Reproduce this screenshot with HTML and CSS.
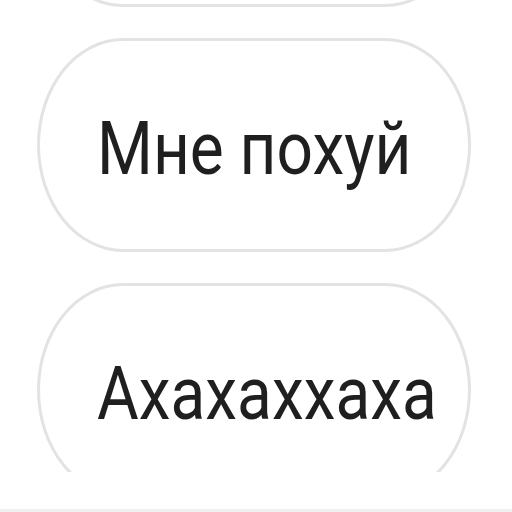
FILE: index.html
```html
<!DOCTYPE html>
<html lang="ru">
<head>
<meta charset="utf-8">
<title>Ответы</title>
<link rel="stylesheet" href="styles.css">
</head>
<body>
<div class="screen">
  <div class="list">
    <div class="track">
      <button class="pill pill-offscreen"></button>
      <button class="pill"><span class="label">Мне похуй</span></button>
      <button class="pill"><span class="label">Ахахаххаха</span></button>
    </div>
  </div>
  <div class="gap"></div>
  <div class="bar"></div>
</div>
</body>
</html>
```

FILE: styles.css
```css
html, body {
  margin: 0;
  padding: 0;
  background: #ffffff;
}

.screen {
  width: 512px;
  height: 512px;
  display: flex;
  flex-direction: column;
}

.list {
  height: 472px;
  overflow: hidden;
  flex: none;
}

/* list scrolled so the first reply is mostly out of view */
.track {
  display: flex;
  flex-direction: column;
  gap: 31px;
  margin-top: -207px;
  padding-left: 37px;
}

.pill {
  width: 434px;
  height: 214px;
  box-sizing: border-box;
  border: 3px solid #e3e3e3;
  border-radius: 86px / 107px;
  background: #ffffff;
  display: flex;
  align-items: center;
  justify-content: flex-start;
  padding: 7px 0 0 57px;
  margin: 0;
  flex: none;
}

.label {
  display: inline-block;
  font-family: Roboto, "Noto Sans", sans-serif;
  font-size: 64px;
  line-height: 1;
  color: #1f1f1f;
  transform: scaleY(1.17);
  transform-origin: 50% 50%;
  white-space: nowrap;
}

.gap {
  flex: 1;
  background: #ffffff;
}

.bar {
  height: 3px;
  background: #f0f0f0;
  flex: none;
}
```
